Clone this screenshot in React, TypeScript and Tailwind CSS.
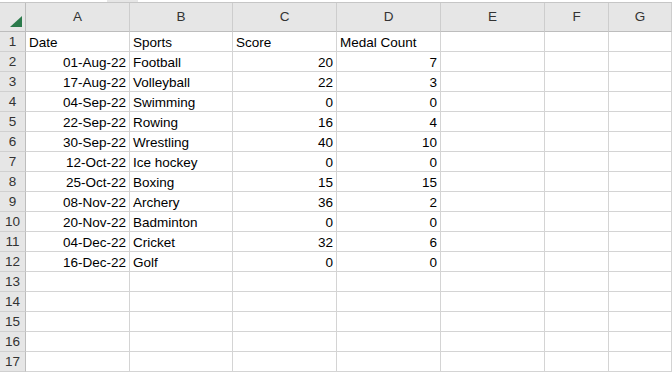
const COLUMNS = ["A", "B", "C", "D", "E", "F", "G"];

const ROWS: [string, string, string, string][] = [
  ["Date", "Sports", "Score", "Medal Count"],
  ["01-Aug-22", "Football", "20", "7"],
  ["17-Aug-22", "Volleyball", "22", "3"],
  ["04-Sep-22", "Swimming", "0", "0"],
  ["22-Sep-22", "Rowing", "16", "4"],
  ["30-Sep-22", "Wrestling", "40", "10"],
  ["12-Oct-22", "Ice hockey", "0", "0"],
  ["25-Oct-22", "Boxing", "15", "15"],
  ["08-Nov-22", "Archery", "36", "2"],
  ["20-Nov-22", "Badminton", "0", "0"],
  ["04-Dec-22", "Cricket", "32", "6"],
  ["16-Dec-22", "Golf", "0", "0"],
];

const TOTAL_ROWS = 17;
const GRID = "grid grid-cols-[26px_104px_103px_104px_104px_104px_64px_1fr]";

function Cell({ value, right }: { value?: string; right?: boolean }) {
  return (
    <div
      className={`flex h-[20px] items-end overflow-hidden whitespace-nowrap border-r border-b border-[#d4d4d4] bg-white px-[3px] text-[13.5px] leading-[17px] text-black ${
        right ? "justify-end" : "justify-start"
      }`}
    >
      {value}
    </div>
  );
}

export default function App() {
  return (
    <div
      className="h-[372px] w-[672px] overflow-hidden bg-white"
      style={{ fontFamily: '"Liberation Sans", Arial, sans-serif' }}
    >
      {/* bottom edge of the name box / formula bar */}
      <div className="flex h-[3px] border-b border-[#c6c6c6] bg-[#e6e6e6]">
        <div className="w-[107px] bg-white" />
        <div className="w-[31px]" />
        <div className="flex-1 bg-white" />
      </div>

      <div className={GRID}>
        <div className="relative h-[29px] border-r border-b border-[#bdbdbd] bg-[#e6e6e6]">
          <div className="absolute right-[3px] bottom-[4px] h-0 w-0 border-b-[11px] border-l-[12px] border-b-[#2b7a4b] border-l-transparent" />
        </div>
        {COLUMNS.map((col) => (
          <div
            key={col}
            className="flex h-[29px] items-center justify-center border-r border-b border-r-[#cdcdcd] border-b-[#bdbdbd] bg-[#e6e6e6] pt-[1px] text-[13.5px] text-[#333]"
          >
            {col}
          </div>
        ))}

        {Array.from({ length: TOTAL_ROWS }, (_, i) => {
          const row = ROWS[i];
          const isHeader = i === 0;
          return [
            <div
              key={`h${i}`}
              className="flex h-[20px] items-center justify-center border-r border-b border-r-[#bdbdbd] border-b-[#d0d0d0] bg-[#e6e6e6] pt-[1px] text-[13.5px] text-[#333]"
            >
              {i + 1}
            </div>,
            <Cell key={`a${i}`} value={row?.[0]} right={!isHeader} />,
            <Cell key={`b${i}`} value={row?.[1]} />,
            <Cell key={`c${i}`} value={row?.[2]} right={!isHeader} />,
            <Cell key={`d${i}`} value={row?.[3]} right={!isHeader} />,
            <Cell key={`e${i}`} />,
            <Cell key={`f${i}`} />,
            <Cell key={`g${i}`} />,
          ];
        })}
      </div>
    </div>
  );
}
